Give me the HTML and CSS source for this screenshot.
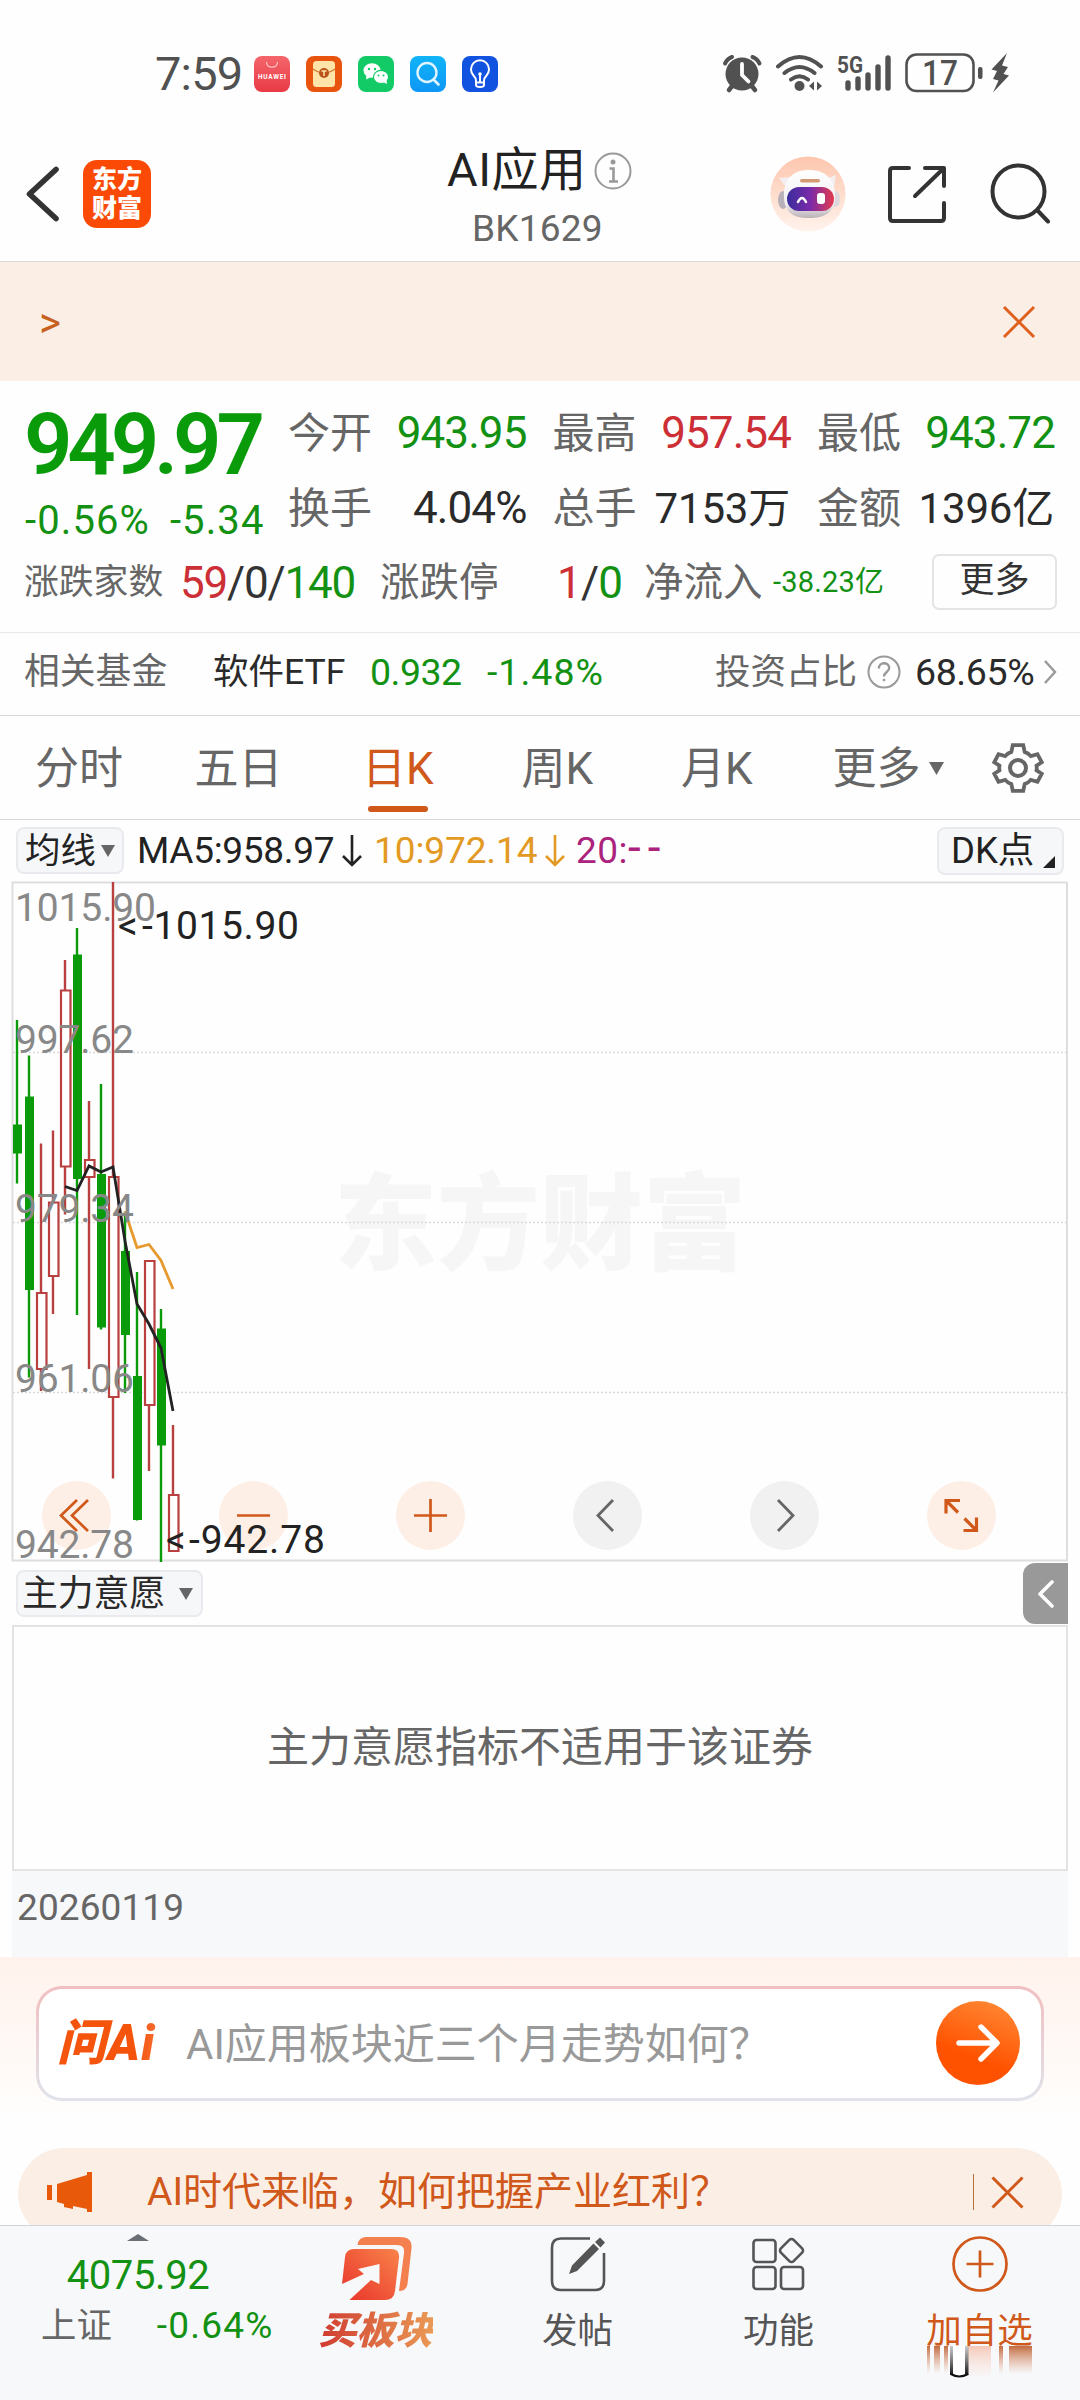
FILE: index.html
```html
<!DOCTYPE html>
<html lang="zh-CN">
<head>
<meta charset="utf-8">
<title>AI应用 BK1629</title>
<link rel="stylesheet" href="styles.css">
</head>
<body>
<div class="screen">

<div class="status">
  <span class="clock">7:59</span>
  <div class="apps">
    <svg width="36" height="36" viewBox="0 0 36 36"><defs><linearGradient id="hw" x2="0" y2="1"><stop offset="0" stop-color="#f4656b"/><stop offset="1" stop-color="#e93a45"/></linearGradient></defs><rect width="36" height="36" rx="8" fill="url(#hw)"/><path d="M12.500 6c0 7 11 7 11 0" fill="none" stroke="#fbd0d2" stroke-width="1.200"/><text x="4" y="23" font-size="6.500" font-weight="700" textLength="28" fill="#fff">HUAWEI</text></svg>
    <svg width="36" height="36" viewBox="0 0 36 36"><rect width="36" height="36" rx="8" fill="#e8540e"/><rect x="7" y="5" width="22" height="26" rx="3.500" fill="#ffe3a8"/><path d="M7 13q11 8 22 0" fill="none" stroke="#d9702a" stroke-width="1.200"/><circle cx="18" cy="17" r="5" fill="#b9541a"/><path d="M15.500 15h5M18 15v5" stroke="#ffe3a8" stroke-width="1.500"/></svg>
    <svg width="36" height="36" viewBox="0 0 36 36"><rect width="36" height="36" rx="8" fill="#12cb67"/><ellipse cx="14" cy="14.500" rx="8.500" ry="7.300" fill="#fff"/><path d="M8.500 19l-.5 4.500 5-2.500z" fill="#fff"/><ellipse cx="23" cy="21" rx="7.600" ry="6.600" fill="#fff" stroke="#12cb67" stroke-width="1.200"/><path d="M25 26l4 2-.5-4z" fill="#fff"/><g fill="#12cb67"><circle cx="11" cy="13" r="1.200"/><circle cx="17" cy="13" r="1.200"/><circle cx="20.500" cy="19.500" r="1"/><circle cx="25.500" cy="19.500" r="1"/></g></svg>
    <svg width="36" height="36" viewBox="0 0 36 36"><defs><linearGradient id="sr" x2="0" y2="1"><stop offset="0" stop-color="#10b4f7"/><stop offset="1" stop-color="#0e96f5"/></linearGradient></defs><rect width="36" height="36" rx="8" fill="url(#sr)"/><circle cx="17" cy="16.500" r="9.500" fill="none" stroke="#dff4ff" stroke-width="2.400"/><path d="M23.500 23.500l5 5" stroke="#dff4ff" stroke-width="2.600" stroke-linecap="round"/></svg>
    <svg width="36" height="36" viewBox="0 0 36 36"><rect width="36" height="36" rx="8" fill="#1152e0"/><path d="M14 25q0-3-2.500-5.500a9 9 0 1 1 13 0Q22 22 22 25v4q0 2-4 2t-4-2zM14 26.500h8M18 19v7" fill="none" stroke="#fff" stroke-width="2"/><circle cx="18" cy="18" r="1.800" fill="#fff"/></svg>
  </div>
  <svg class="sys" width="290" height="42" viewBox="722 52 290 42" fill="#515151">
    <circle cx="742" cy="74" r="16.500"/><path d="M733 85l-4 5M751 85l4 5" stroke="#515151" stroke-width="4.500" stroke-linecap="round"/><path d="M725 63.500q2.500-5 7-6.500M759.500 63.500q-2.500-5-7-6.500" fill="none" stroke="#515151" stroke-width="4" stroke-linecap="round"/><path d="M742 64v11l6.500 6.500" fill="none" stroke="#fff" stroke-width="3.800" stroke-linecap="round" stroke-linejoin="round"/>
    <g fill="none" stroke="#515151" stroke-width="4" stroke-linecap="round"><path d="M778 66.500q21.500-19 43 0M784.500 73q15-12 30 0M791 79.500q8.500-6.500 17 0"/></g><circle cx="799.500" cy="86" r="5"/><path d="M814 81.500v9l-5-4.500zM817 81.500v9l5-4.500z"/>
    <text x="837" y="73" font-size="23" font-weight="700" textLength="26" lengthAdjust="spacingAndGlyphs">5G</text>
    <g stroke="#515151" stroke-width="5.400" stroke-linecap="round"><path d="M848 83v5M858 79v9M868 75v13M878 67v21M888 58v30"/></g>
    <rect x="906.500" y="54.500" width="67" height="36.500" rx="10" fill="none" stroke="#515151" stroke-width="2.600"/><text x="922" y="85" font-size="35" font-weight="500" textLength="36" lengthAdjust="spacingAndGlyphs">17</text><rect x="978" y="67" width="4.500" height="12" rx="2"/><path d="M1007 53l-15.500 16.500 5.500 1.500-4 8 5.500 1.500-5.500 12 16-17-5.500-1.500 4.500-7-6-1.500z"/>
  </svg>
</div>

<header class="head">
  <svg class="back" width="36" height="60" viewBox="25 164 36 60"><path d="M56 169.500L29.500 194 56 218.500" fill="none" stroke="#333" stroke-width="5.600" stroke-linecap="round" stroke-linejoin="round"/></svg>
  <div class="brand"><span>东方</span><span>财富</span></div>
  <div class="title">
    <div class="name">AI应用<svg width="38" height="38" viewBox="0 0 38 38"><circle cx="19" cy="19" r="17.500" fill="none" stroke="#999" stroke-width="2"/><circle cx="19" cy="10" r="2.500" fill="#999"/><path d="M15.500 16.500H19.500V29M15 29.500h9" fill="none" stroke="#999" stroke-width="2.600"/></svg></div>
    <div class="code">BK1629</div>
  </div>
  <svg class="robot" width="76" height="76" viewBox="0 0 76 76"><defs><linearGradient id="rb" x2="0" y2="1"><stop offset="0" stop-color="#fdc6ae"/><stop offset="1" stop-color="#fff3ec"/></linearGradient><linearGradient id="vz"><stop offset="0" stop-color="#3a2d9d"/><stop offset=".5" stop-color="#7b2aa8"/><stop offset="1" stop-color="#e33a4e"/></linearGradient><linearGradient id="hd" x2="0" y2="1"><stop offset="0" stop-color="#fff"/><stop offset=".7" stop-color="#f3eff2"/><stop offset="1" stop-color="#b9b2b6"/></linearGradient></defs><circle cx="38" cy="38" r="37.500" fill="url(#rb)"/><path d="M9 22l12-1-6 9zM66 19l-10 4 8 8z" fill="#f2eef2"/><ellipse cx="13" cy="44" rx="5" ry="9" fill="#b9b1ba"/><ellipse cx="65" cy="43" rx="5" ry="8" fill="#ddd6dc"/><path d="M14 42C13 22 24 14 39 14s27 8 26 28c-.5 15-11 20-26 20S15 57 14 42z" fill="url(#hd)"/><rect x="30" y="23" width="20" height="3.500" rx="1.700" fill="#d39a74"/><rect x="17" y="31" width="47" height="24" rx="12" fill="url(#vz)"/><path d="M28 46q4-8 8 0" fill="none" stroke="#fff" stroke-width="2.500" stroke-linecap="round"/><rect x="47" y="37" width="8" height="11" rx="3" fill="#fff"/></svg>
  <svg class="share" width="60" height="60" viewBox="887 165 60 60" fill="none" stroke="#333" stroke-width="4" stroke-linecap="round" stroke-linejoin="round"><path d="M909 168H893q-3 0-3 3v47q0 3 3 3h48q3 0 3-3v-15M925 168h19v18M943 169l-28 27"/></svg>
  <svg class="find" width="62" height="62" viewBox="989 162 62 62" fill="none" stroke="#333" stroke-width="4" stroke-linecap="round"><circle cx="1018.500" cy="191.500" r="26"/><path d="M1038 211l10 10.500"/></svg>
</header>

<div class="banner"><span class="more-arrow">&gt;</span><svg width="34" height="34" viewBox="0 0 34 34"><path d="M2 2l30 30M32 2L2 32" stroke="#df5f1d" stroke-width="3"/></svg></div>

<section class="quote">
  <div class="quote-top">
    <div class="last"><div class="price">949.97</div><div class="chg"><span>-0.56%</span><span>-5.34</span></div></div>
    <div class="cells">
      <div class="cell"><i>今开</i><b class="dn">943.95</b></div><div class="cell"><i>最高</i><b class="up">957.54</b></div><div class="cell"><i>最低</i><b class="dn">943.72</b></div>
      <div class="cell"><i>换手</i><b>4.04%</b></div><div class="cell"><i>总手</i><b class="mix">7153万</b></div><div class="cell"><i>金额</i><b class="mix">1396亿</b></div>
    </div>
  </div>
  <div class="quote-row">
    <span class="k1">涨跌家数</span><span class="v1"><em class="up">59</em>/0/<em class="dn">140</em></span>
    <span class="k2">涨跌停</span><span class="v2"><em class="up">1</em>/<em class="dn">0</em></span>
    <span class="k3">净流入</span><span class="v3 dn">-38.23亿</span>
    <span class="more-btn">更多</span>
  </div>
</section>

<div class="fund">
  <span class="f1">相关基金</span><span class="f2">软件ETF</span><span class="f3 dn">0.932</span><span class="f4 dn">-1.48%</span>
  <span class="f5">投资占比</span>
  <svg class="q" width="34" height="34" viewBox="0 0 34 34" fill="none" stroke="#999" stroke-width="2"><circle cx="17" cy="17" r="15.500"/><path d="M11.800 13.500c0-7 10.400-7 10.400-.5 0 4-5.200 4-5.200 8.500" stroke-width="2.400"/><circle cx="17" cy="25" r="1" fill="#999" stroke-width="1"/></svg>
  <span class="f6">68.65%</span>
  <svg class="go" width="14" height="26" viewBox="0 0 14 26"><path d="M2 2l10 11L2 24" fill="none" stroke="#999" stroke-width="2.400"/></svg>
</div>

<nav class="tabs">
  <span>分时</span><span>五日</span><span class="on">日K</span><span>周K</span><span>月K</span><span>更多<svg width="15" height="13" viewBox="0 0 15 13"><path d="M0 0h15L7.500 13z" fill="#666"/></svg></span>
  <svg class="gear" width="52" height="52" viewBox="-26 -26 52 52" fill="none" stroke="#666" stroke-width="4"><path d="M-5.500-24H5.500L7-17Q11-15.500 13.500-12.500L20.500-14.500L25-6L19.500-2.500Q20 0 19.500 2.500L25 6L20.500 14.500L13.500 12.500Q11 15.500 7 17L5.500 24H-5.500L-7 17Q-11 15.500-13.500 12.500L-20.500 14.500L-25 6L-19.500 2.500Q-20 0-19.500-2.500L-25-6L-20.500-14.500L-13.500-12.500Q-11-15.500-7-17Z" transform="scale(.95)"/><circle r="8"/></svg>
</nav>

<div class="legend">
  <span class="pill">均线<svg width="14" height="12" viewBox="0 0 14 12"><path d="M0 0h14L7 12z" fill="#666"/></svg></span>
  <span class="m5">MA5:958.97</span><svg class="ar" width="20" height="32" viewBox="0 0 20 32"><path d="M10 0v29M1 21l9 9 9-9" fill="none" stroke="#222" stroke-width="2.600"/></svg>
  <span class="m10">10:972.14</span><svg class="ar" width="20" height="32" viewBox="0 0 20 32"><path d="M10 0v29M1 21l9 9 9-9" fill="none" stroke="#e39a24" stroke-width="2.600"/></svg>
  <span class="m20">20:<em>--</em></span>
  <span class="dk">DK点<svg width="12" height="12" viewBox="0 0 12 12"><path d="M12 0v12H0z" fill="#222"/></svg></span>
</div>

<svg class="chart" width="1057" height="682" viewBox="11 881 1057 682">
  <text class="mark" x="334" y="1261" textLength="412" lengthAdjust="spacingAndGlyphs">东方财富</text>
  <rect x="12.500" y="882.500" width="1054.500" height="678" fill="none" stroke="#dedede" stroke-width="2"/>
  <g stroke="#dadada" stroke-width="1.300" stroke-dasharray="2 2"><path d="M13 1052.500H1067M13 1222.500H1067M13 1392.500H1067"/></g>
  <g fill="#feefe6"><circle cx="76.500" cy="1515.500" r="34.500"/><circle cx="253.500" cy="1515.500" r="34.500"/><circle cx="430.500" cy="1515.500" r="34.500"/><circle cx="961.500" cy="1515.500" r="34.500"/></g>
  <g fill="#f1f1f1"><circle cx="607.500" cy="1515.500" r="34.500"/><circle cx="784.500" cy="1515.500" r="34.500"/></g>
  <g fill="none" stroke="#d0581a" stroke-width="2.700"><path d="M77 1500l-16 15.500L77 1531M88 1500l-16 15.500L88 1531M237 1515.500h33M414 1515.500h33M430.500 1499v33"/><path d="M960 1500.500h-14v13M946 1500.500l12 12M963.500 1530.500h13v-13M976.500 1530.500l-12-12" stroke-width="3.200"/></g>
  <g fill="none" stroke="#666" stroke-width="2.800"><path d="M613 1500l-15 15.500 15 15.500M778 1500l15 15.500-15 15.500"/></g>
  <g stroke="#0a9b0a" stroke-width="2.400"><path d="M17 1020V1183.500M29 1055.500V1377.500M77 928V1315M101 1084V1329.500M125 1211.500V1393M137 1272V1520.500M161 1309V1562"/></g>
  <g fill="#0a9b0a"><path d="M13 1124.500h9v29h-9zM25 1096.500h9v193.500h-9zM73 954.500h9v224.500h-9zM97 1174h9v153.500h-9zM121 1251h9v84h-9zM133 1376h9v144h-9zM157 1328.500h9v117h-9z"/></g>
  <g stroke="#b8403f" stroke-width="2.400"><path d="M41 1143.500V1293M41 1369V1391M53 1130.500V1202.500M53 1276V1314M65 960V990.500M65 1166.500V1214.500M89 1101V1160M89 1177V1369M113 882V1177M113 1397V1478.500M149 1405V1471M173 1425V1495"/></g>
  <g fill="#fff" stroke="#b8403f" stroke-width="2.200"><path d="M37 1293h9.500v76h-9.500zM49 1202.500h9.500v73.500h-9.500zM61 990.500h9.500v176h-9.500zM85 1160h9.500v17h-9.500zM109 1177h9.500v220h-9.500zM145 1261h9.500v144h-9.500zM169 1495h9.500v56h-9.500z"/></g>
  <path d="M125 1211.500L137 1247.500 149 1244.500 161 1260.500 173 1289" fill="none" stroke="#e69a2e" stroke-width="2.800"/>
  <path d="M65 1186.500L77 1190.500 89 1166 101 1172 113 1167 125 1241 137 1304 149 1324 161 1348 173 1411" fill="none" stroke="#222" stroke-width="2.800"/>
  <g class="axis"><text x="15" y="920.500" textLength="141">1015.90</text><text x="15" y="1052.500" textLength="119">997.62</text><text x="15" y="1222" textLength="119">979.34</text><text x="15" y="1391.500" textLength="119">961.06</text><text x="15" y="1557.500" textLength="119">942.78</text></g>
  <g class="peak"><text x="118" y="939">&lt;</text><text x="142" y="939" textLength="157">-1015.90</text><text x="166" y="1553">&lt;</text><text x="189" y="1553" textLength="136">-942.78</text></g>
</svg>

<div class="indi">
  <span class="pill wide">主力意愿<svg width="14" height="12" viewBox="0 0 14 12"><path d="M0 0h14L7 12z" fill="#666"/></svg></span>
  <span class="side"><svg width="18" height="28" viewBox="0 0 18 28"><path d="M15 2L3 14l12 12" fill="none" stroke="#fff" stroke-width="3.600" stroke-linecap="round" stroke-linejoin="round"/></svg></span>
</div>
<div class="empty">主力意愿指标不适用于该证券</div>
<div class="dates"><span>20260119</span></div>

<section class="ask">
  <div class="ask-box">
    <span class="ask-logo">问Ai</span><span class="ask-text">AI应用板块近三个月走势如何？</span>
    <span class="ask-go"><svg width="46" height="40" viewBox="0 0 46 40"><path d="M4 20h37M26 4l16 16-16 16" fill="none" stroke="#fff" stroke-width="5.400" stroke-linecap="round" stroke-linejoin="round"/></svg></span>
  </div>
</section>

<div class="ticker-wrap"><div class="ticker">
  <svg width="46" height="40" viewBox="0 0 46 40" fill="#e8590a"><path d="M0 13h5v15H0zM10 12L40 3V0h5v40h-5v-3l-14-3v3l-9-2v-3l-7-2z"/></svg>
  <span class="tick-text">AI时代来临，如何把握产业红利？</span><span class="bar"></span>
  <svg width="33" height="33" viewBox="0 0 33 33"><path d="M1.500 1.500l30 30M31.500 1.500l-30 30" stroke="#d0581a" stroke-width="3"/></svg>
</div></div>

<footer class="dock">
  <div class="idx"><svg width="22" height="7" viewBox="0 0 22 7"><path d="M11 0l11 7H0z" fill="#6a6e75"/></svg><div class="idx-v">4075.92</div><div class="idx-r"><span>上证</span><span class="dn">-0.64%</span></div></div>
  <div class="item buy"><svg width="72" height="66" viewBox="341 2236 72 66"><defs><linearGradient id="b1" x1="0" y1="1" x2="1" y2="0"><stop offset="0" stop-color="#e8332b"/><stop offset="1" stop-color="#f9834a"/></linearGradient></defs><path d="M357.500 2245q1-8 9-8h33q13 0 12 11l-4 36q-1 7-8.500 7l5-38q1-8-7-8z" fill="#f4804f"/><path d="M342 2284L345 2257q1-8 9-8h37q9 0 8 9l-4 33q-1 9-10 9H349.500L371 2280l8.500 4V2264L358 2269l6 5z" fill="url(#b1)"/></svg><span>买板块</span></div>
  <div class="item"><svg width="56" height="56" viewBox="549 2236 56 56"><path d="M589 2238.500H560q-9 0-9 9V2281q0 9 9 9h34q9 0 9-9V2253" fill="none" stroke="#555" stroke-width="2.600"/><path d="M599 2237.500l5 5-4.500 5-5.500-5.500zM592.500 2243.500l5.500 5.500-22 22-8 3 3-8.500z" fill="#555"/></svg><span>发帖</span></div>
  <div class="item"><svg width="56" height="56" viewBox="751 2236 56 56" fill="none" stroke="#555" stroke-width="2.600"><rect x="753.500" y="2240" width="22" height="22" rx="3"/><rect x="753.500" y="2267" width="22" height="22" rx="3"/><rect x="781" y="2267" width="22" height="22" rx="3"/><rect x="782.500" y="2241.500" width="18" height="18" rx="3" transform="rotate(45 791.500 2250.500)"/></svg><span>功能</span></div>
  <div class="item add"><svg width="56" height="56" viewBox="0 0 56 56" fill="none" stroke="#d0581a" stroke-width="2.700"><circle cx="28" cy="28" r="26.500"/><path d="M28 14.500v27M14.500 28h27"/></svg><span>加自选</span>
    <svg class="smear" width="110" height="36" viewBox="924 2343 110 36"><defs><linearGradient id="sm" x2="0" y2="1"><stop offset="0" stop-color="#b9531f" stop-opacity=".85"/><stop offset="1" stop-color="#d98a68" stop-opacity="0"/></linearGradient><linearGradient id="sl" x2="0" y2="1"><stop offset="0" stop-color="#f3a88c" stop-opacity=".6"/><stop offset="1" stop-color="#fbd8cb" stop-opacity=".1"/></linearGradient><linearGradient id="sk" x2="0" y2="1"><stop offset="0" stop-color="#555" stop-opacity=".3"/><stop offset="1" stop-color="#111"/></linearGradient></defs><g fill="url(#sm)"><rect x="927" y="2346" width="3" height="28"/><rect x="934" y="2346" width="6" height="28"/><rect x="944" y="2346" width="4" height="28"/><rect x="999" y="2346" width="4" height="28"/><rect x="1009" y="2346" width="23" height="28"/></g><rect x="968" y="2346" width="23" height="30" fill="url(#sl)"/><rect x="952" y="2346" width="13" height="30" fill="#fff" opacity=".8"/><rect x="950" y="2346" width="3" height="29" fill="url(#sk)"/><rect x="965" y="2346" width="3.500" height="29" fill="url(#sk)"/><path d="M951 2374q8 5 17 0" fill="none" stroke="#111" stroke-width="2.200"/></svg>
  </div>
</footer>
</div>
</body>
</html>
```
FILE: styles.css
```css
* { box-sizing: border-box; }
body { margin: 0; background: #fefefe; font-family: Roboto, "Noto Sans CJK SC", sans-serif; color: #2a2a2a; }
svg { display: block; flex: none; }
i, em { font-style: normal; }
b { font-weight: 400; }
.screen { width: 1080px; height: 2400px; overflow: hidden; display: flex; flex-direction: column; white-space: nowrap; }
.screen > * { flex: none; }
.dn { color: #139113; }
.up { color: #cc2f35; }

.status { height: 104px; padding: 44px 68px 0 155px; display: flex; align-items: flex-start; }
.clock { width: 99px; line-height: 60px; font-size: 47px; letter-spacing: -.8px; color: #515151; }
.apps { display: flex; gap: 16px; padding-top: 12px; }
.sys { margin: 8px 0 0 auto; }

.head { height: 158px; border-bottom: 1.5px solid #d9dad2; display: flex; position: relative; padding: 0 28px 0 25px; }
.back { margin-top: 60px; }
.brand { margin: 56px 0 0 22px; width: 68px; height: 68px; border-radius: 14px; background: #fb4a05; color: #fff; font-size: 25px; font-weight: 900; line-height: 29px; display: flex; flex-direction: column; align-items: center; padding-top: 5px; }
.title { width: 230px; margin-left: 272px; margin-top: 35px; padding-left: 24px; }
.name { font-size: 47px; line-height: 62px; display: flex; align-items: center; color: #222; letter-spacing: .5px; }
.name svg { margin-left: 8px; margin-top: 2px; }
.code { font-size: 37px; line-height: 54px; margin-top: 1px; padding-left: 25px; color: #666; letter-spacing: .2px; }
.robot { margin: 52px 0 0 117px; }
.share { margin: 61px 0 0 41px; }
.find { margin: 58px 0 0 42px; }

.banner { height: 119px; background: #fbeee5; display: flex; align-items: center; justify-content: space-between; padding: 0 44px 0 39px; color: #c8601f; }
.more-arrow { font-size: 42px; line-height: 60px; padding-top: 2px; }

.quote { height: 252px; border-bottom: 1.5px solid #e9e9e9; padding-top: 14px; }
.quote-top { display: flex; padding-left: 24px; height: 150px; }
.last { width: 264px; padding-top: 5px; color: #139113; }
.price { font-size: 85px; font-weight: 600; line-height: 90px; height: 88px; letter-spacing: -5.200px; color: #0a9b0a; }
.chg { font-size: 40px; line-height: 65px; display: flex; gap: 20px; letter-spacing: 1.100px; padding-left: 1px; }
.chg span { width: 128px; }
.cells { display: grid; grid-template-columns: 264.500px 264.500px 264px; grid-auto-rows: 75px; }
.cell { display: flex; justify-content: space-between; padding-right: 26px; line-height: 77px; }
.cell i { font-size: 42px; color: #666; }
.cell b { font-size: 44px; letter-spacing: -.9px; }
.cell .mix { font-size: 42px; letter-spacing: -.2px; padding-right: 1px; }
.quote-row { display: flex; height: 75px; line-height: 75px; padding: 0 23px 0 24px; align-items: center; font-size: 44px; color: #333; }
.k1 { width: 156px; font-size: 34.800px; color: #666; }
.v1 { width: 200px; letter-spacing: -1.200px; padding-top: 1px; }
.k2 { width: 177px; font-size: 39.500px; color: #666; }
.v2 { width: 87px; letter-spacing: -.8px; padding-top: 1px; }
.k3 { width: 128px; font-size: 39.500px; color: #666; }
.v3 { width: 160px; font-size: 29px; padding-left: 1px; letter-spacing: .2px; }
.more-btn { width: 125px; height: 56px; line-height: 50px; border: 2px solid #e4e4e4; border-radius: 7px; font-size: 35px; text-align: center; margin-top: -2px; }

.fund { height: 83px; display: flex; align-items: center; padding: 0 22px 4px 24px; line-height: 60px; font-size: 37.500px; border-bottom: 1.5px solid #d6d6d6; }
.f1 { width: 189px; font-size: 35.800px; color: #666; }
.f2 { width: 157px; font-size: 35.500px; }
.f3 { width: 117px; letter-spacing: -.5px; }
.f4 { width: 228px; letter-spacing: 1px; }
.f5 { width: 152px; font-size: 35.500px; color: #666; }
.f6 { margin-left: 14px; width: 128px; letter-spacing: -.4px; }

.tabs { height: 104px; display: flex; align-items: center; padding: 0 0 0 35px; font-size: 44px; color: #666; border-bottom: 1.5px solid #d6d6d6; line-height: 104px; }
.tabs span { width: 159.500px; display: flex; align-items: center; padding-top: 2px; }
.tabs .on { color: #d0581a; position: relative; padding-left: 8px; }
.tabs .on::after { content: ""; position: absolute; left: 14px; bottom: 9px; width: 60px; height: 6px; border-radius: 3px; background: #d0581a; }
.tabs span:nth-child(4) { padding-left: 8px; }
.tabs span:nth-child(5) { padding-left: 8px; }
.tabs span svg { margin-left: 8px; }

.legend { height: 61px; display: flex; align-items: center; padding: 0 16px; font-size: 37px; line-height: 62px; color: #222; }
.pill { width: 108px; height: 47px; border: 2px solid #e8eaee; border-radius: 8px; background: #f6f7f9; font-size: 35.400px; line-height: 42px; display: flex; align-items: center; padding-left: 7px; }
.pill svg { margin-left: 5px; }
.m5 { margin-left: 13px; width: 205px; letter-spacing: -.3px; }
.m10 { margin-left: 12px; width: 171px; color: #e39a24; letter-spacing: -.1px; }
.m20 { margin-left: 11px; color: #ab237c; letter-spacing: .5px; }
.m20 em { font-size: 46px; line-height: 40px; letter-spacing: 7px; }
.dk { margin-left: auto; width: 127px; height: 48px; border: 2px solid #e8eaee; border-radius: 8px; background: #f6f7f9; font-size: 36.500px; line-height: 44px; display: flex; padding-left: 12px; }
.dk svg { margin: 27px 0 0 9px; }

.chart { margin: 0 0 0 11px; }
.mark { font-size: 105px; font-weight: 900; fill: #f6f6f6; }
.axis { font-size: 39px; fill: #888; }
.peak { font-size: 39px; fill: #222; }

.indi { height: 62px; margin: 0 12px; display: flex; justify-content: space-between; align-items: flex-start; }
.wide { width: 187px; margin: 7px 0 0 4px; padding-left: 4px; font-size: 35.800px; }
.wide svg { margin-left: 14px; }
.side { width: 45px; height: 61px; border-radius: 12px 0 0 12px; background: #999; display: flex; align-items: center; justify-content: center; }
.empty { height: 246px; margin: 0 12px; border: 2px solid #e3e3e3; font-size: 42px; line-height: 241px; text-align: center; color: #666; }
.dates { height: 86px; margin: 0 12px; background: #f7f8fa; padding-left: 5px; font-size: 37px; line-height: 74px; color: #666; letter-spacing: .1px; }

.ask { height: 191px; padding: 29px 36px 0; background: linear-gradient(#fff2ec, #fffaf7 60%, #fefefe 85%); }
.ask-box { height: 115px; border: 3px solid transparent; border-radius: 26px; background: linear-gradient(#fff, #fff) padding-box, linear-gradient(#f1bfbf, #e0e2ec) border-box; display: flex; align-items: center; padding: 0 21px 2px 18px; }
.ask-logo { width: 129px; font-size: 49px; line-height: 60px; font-weight: 900; font-style: italic; letter-spacing: 1.500px; padding-top: 2px; background: linear-gradient(90deg, #f4540c 60%, #f9895a); -webkit-background-clip: text; color: transparent; }
.ask-text { font-size: 42px; line-height: 60px; color: #999; margin-top: 4px; }
.ask-go { margin-left: auto; width: 84px; height: 84px; border-radius: 50%; background: linear-gradient(200deg, #ff8430 10%, #ff5200 65%); display: flex; align-items: center; justify-content: center; }

.ticker-wrap { height: 77px; padding: 0 18px; overflow: hidden; }
.ticker { height: 92px; border-radius: 46px; background: #fbeee5; display: flex; align-items: center; padding: 0 38px 4px 29px; color: #d0581a; font-size: 39px; line-height: 60px; }
.tick-text { margin-left: 54px; }
.bar { margin-left: auto; margin-right: 17px; width: 1px; height: 36px; background: #b8703c; }

.dock { height: 176px; background: #f7f8fa; border-top: 1.500px solid #cfd4dc; display: flex; color: #555; }
.idx { width: 276px; padding-top: 8px; display: flex; flex-direction: column; align-items: center; }
.idx-v { margin-top: 5px; font-size: 40px; line-height: 60px; letter-spacing: -.4px; color: #139113; }
.idx-r { display: flex; width: 276px; padding-left: 41px; font-size: 35.400px; line-height: 40px; color: #666; }
.idx-r .dn { margin-left: 45px; font-size: 37px; letter-spacing: 1.200px; }
.item { width: 201px; padding-top: 10px; display: flex; flex-direction: column; align-items: center; position: relative; font-size: 35.500px; line-height: 50px; }
.item span { margin-top: 14px; }
.buy svg { margin-left: 0; }
.buy span { margin-top: 4px; margin-left: -2px; font-size: 38px; font-weight: 900; font-style: italic; background: linear-gradient(90deg, #cf3a30, #ea9a55); -webkit-background-clip: text; color: transparent; }
.add { color: #d0581a; }
.smear { position: absolute; left: 45px; top: 117px; }
```
